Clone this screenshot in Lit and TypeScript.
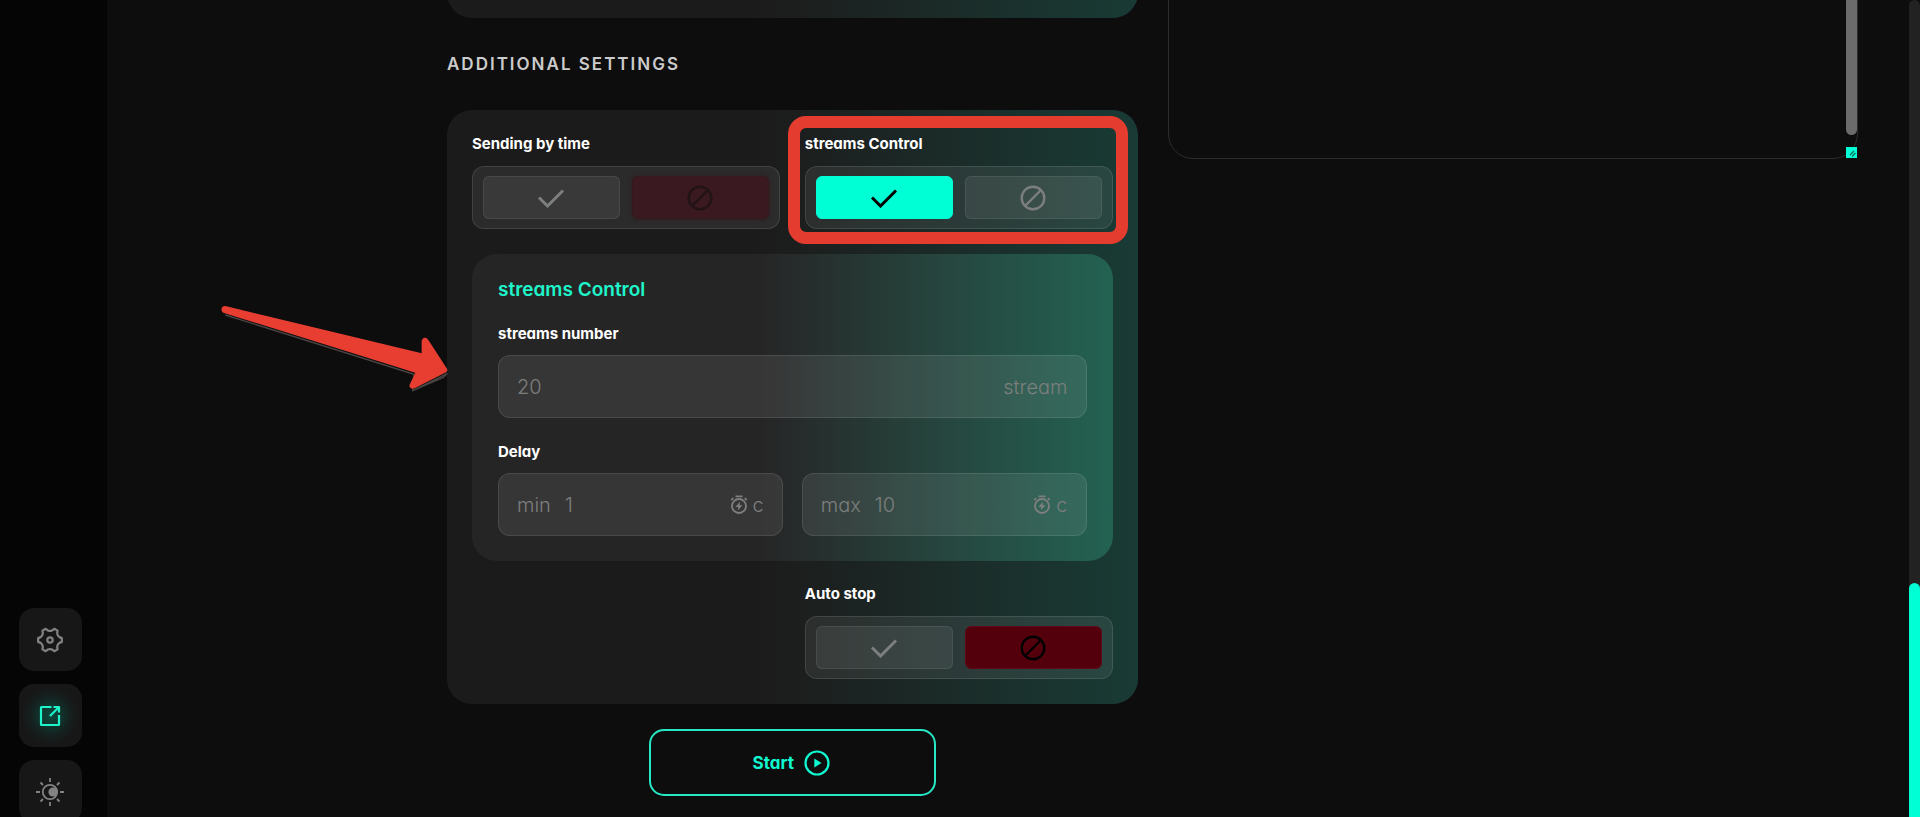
import { LitElement, html, css, svg, nothing } from "lit";
import { customElement, property } from "lit/decorators.js";

const gearPath = (() => {
  const at = (radius: number, degrees: number) => {
    const a = (degrees * Math.PI) / 180;
    return `${(14 + radius * Math.cos(a)).toFixed(2)} ${(14 + radius * Math.sin(a)).toFixed(2)}`;
  };
  return [0, 60, 120, 180, 240, 300]
    .map((a, i) => `${i ? "L" : "M"}${at(12, a - 9)}L${at(12, a + 9)}L${at(9.8, a + 17)}Q${at(8.6, a + 30)} ${at(9.8, a + 43)}`)
    .join("") + "Z";
})();

const checkIcon = svg`<svg width="28" height="20" viewBox="0 0 28 20" aria-hidden="true"><path d="M2 9.500L10.500 18L26 2.500" fill="none" stroke="currentColor" stroke-width="3"/></svg>`;
const banIcon = svg`<svg width="26" height="26" viewBox="0 0 26 26" aria-hidden="true"><g fill="none" stroke="currentColor" stroke-width="2.4"><circle cx="13" cy="13" r="11.3"/><path d="M5 21L21 5"/></g></svg>`;
const timerIcon = svg`<svg width="18" height="20" viewBox="0 0 18 20" aria-hidden="true"><g fill="none" stroke="currentColor" stroke-width="1.800"><circle cx="9" cy="11" r="7"/><path d="M5.500 1.300H12.500M1.300 5L3.300 3.200M16.700 5L14.700 3.200"/></g><path d="M10 6.700L5.400 11.900H8.200L7.900 15.300L12.600 10.200H9.700Z" fill="currentColor"/></svg>`;
const gearIcon = svg`<svg width="28" height="28" viewBox="0 0 28 28" aria-hidden="true"><g fill="none" stroke="currentColor" stroke-width="2.200" stroke-linejoin="round"><path d=${gearPath}/><circle cx="14" cy="14" r="2.700"/></g></svg>`;
const shareIcon = svg`<svg width="24" height="24" viewBox="0 0 24 24" aria-hidden="true"><g fill="none" stroke="currentColor" stroke-width="2.200" stroke-linejoin="round"><path d="M13.500 3H3.500Q3 3 3 3.500V20.500Q3 21 3.500 21H20.500Q21 21 21 20.500V11"/><path d="M12 12L20.500 3.500"/><path d="M15.500 3H21V8.500"/></g></svg>`;
const lightIcon = svg`<svg width="28" height="28" viewBox="0 0 28 28" aria-hidden="true"><g fill="none" stroke="currentColor" stroke-width="1.800"><circle cx="14" cy="14" r="7.200"/><path d="M14 0V4M14 24V28M0 14H4M24 14H28M4.500 4.500L7 7M21 21L23.500 23.500M4.500 23.500L7 21M21 7L23.500 4.500"/></g><circle cx="17" cy="14" r="4.600" fill="currentColor"/></svg>`;
const playIcon = svg`<svg width="26" height="26" viewBox="0 0 26 26" aria-hidden="true"><circle cx="13" cy="13" r="11.500" fill="none" stroke="currentColor" stroke-width="2.200"/><path d="M10.300 8.500L17.500 13L10.300 17.500Z" fill="currentColor"/></svg>`;

@customElement("switch-field")
class SwitchField extends LitElement {
  @property() label = "";
  @property() value = "off";
  @property({ type: Boolean }) muted = false;
  @property({ type: Boolean }) marked = false;

  static styles = css`
    :host { display: block; position: relative; min-width: 0; }
    .caption { display: block; font-size: 15px; line-height: 20px; font-weight: 700; color: #fff; margin-bottom: 12px; }
    .track {
      display: grid; grid-template-columns: 1fr 1fr; gap: 12px; box-sizing: border-box;
      height: 63px; padding: 9px 10px; border: 1px solid rgba(255, 255, 255, 0.11);
      border-radius: 12px; background: rgba(255, 255, 255, 0.07);
    }
    .option {
      position: relative; display: flex; align-items: center; justify-content: center;
      box-sizing: border-box; border: 1px solid rgba(255, 255, 255, 0.08); border-radius: 6px;
      background: rgba(255, 255, 255, 0.07); color: #7d7f7f;
    }
    .radio { position: absolute; inset: 0; margin: 0; opacity: 0; cursor: pointer; }
    .on { background: #00ffd5; border-color: #00ffd5; color: #000; }
    .off { background: #54000c; border-color: #5f0a18; color: #000; }
    .muted .off { background: #3a1920; border-color: #34191f; color: #211316; box-shadow: 0 0 4px #33191e; }
    .mark {
      position: absolute; inset: -18px -15px -15px -17px; border: 12px solid #e43d30;
      border-radius: 18px; pointer-events: none;
    }
  `;

  render() {
    const on = this.value === "on";
    return html`
      <span class="caption" id="caption">${this.label}</span>
      <div class="track ${this.muted ? "muted" : ""}" role="radiogroup" aria-labelledby="caption">
        <label class="option ${on ? "on" : ""}">
          <input class="radio" type="radio" name="state" aria-label="On" .checked=${on} @change=${() => (this.value = "on")} />${checkIcon}
        </label>
        <label class="option ${on ? "" : "off"}">
          <input class="radio" type="radio" name="state" aria-label="Off" .checked=${!on} @change=${() => (this.value = "off")} />${banIcon}
        </label>
      </div>
      ${this.marked ? html`<div class="mark"></div>` : nothing}
    `;
  }
}

@customElement("app-root")
class AppRoot extends LitElement {
  static styles = css`
    :host {
      display: flex; height: 100vh; overflow: hidden; background: #0d0d0e; color: #fff;
      font-family: Inter, "Liberation Sans", sans-serif; font-feature-settings: "cv11";
    }
    * { box-sizing: border-box; }
    .sidebar {
      flex: none; width: 107px; padding: 608px 25px 0 19px; background: #050505;
      display: flex; flex-direction: column; gap: 13px;
    }
    .nav {
      flex: none; width: 63px; height: 63px; border: 0; border-radius: 15px; padding: 0 1px 0 0;
      background: #171717; color: #828282; display: flex; align-items: center; justify-content: center;
    }
    .current { color: #1ef5cb; background: radial-gradient(circle, #0b4a3e 0, #15201e 45%, #171717 65%); }
    .main { flex: 1; min-width: 0; display: grid; grid-template-columns: 1fr 1fr; gap: 30px; padding: 0 51px 0 340px; align-items: start; }
    .column { display: flex; flex-direction: column; min-width: 0; }
    .panel { position: relative; border-radius: 25px; background: linear-gradient(90deg, #1c1b1b 45%, #1b2b28 72%, #193b35 100%); }
    .previous { height: 60px; margin-top: -42px; }
    .title { margin: 34px 0; font-size: 17px; line-height: 24px; font-weight: 600; letter-spacing: 2px; color: #cbcbcb; text-transform: uppercase; }
    .settings { padding: 24px 25px 25px; display: grid; grid-template-columns: 1fr 1fr; column-gap: 25px; }
    .group {
      grid-column: 1 / -1; margin: 25px 0 23px; padding: 24px 26px 25px; border-radius: 25px;
      background: linear-gradient(90deg, #262526 45%, #26443d 72%, #236252 100%);
    }
    .heading { margin: 0 0 22px; font-size: 19px; line-height: 24px; font-weight: 600; color: #1ef5cb; }
    .label { display: block; font-size: 15px; line-height: 20px; font-weight: 700; margin-bottom: 11px; }
    .box {
      display: flex; align-items: center; height: 63px; padding: 0 18px; border-radius: 12px; min-width: 0;
      border: 1px solid rgba(255, 255, 255, 0.1); background: rgba(255, 255, 255, 0.08); color: #7c7f7e;
      font-size: 20px; font-weight: 300;
    }
    .input { flex: 1; min-width: 0; width: 0; padding: 0; border: 0; outline: 0; background: none; color: inherit; font: inherit; font-feature-settings: inherit; }
    .input::placeholder { color: inherit; opacity: 1; }
    .pre { margin-right: 14px; }
    .unit { margin-left: 5px; }
    .count { margin-bottom: 24px; }
    .pair { display: grid; grid-template-columns: 1fr 1fr; gap: 19px; }
    .last { grid-column: 2; }
    .start {
      align-self: center; display: flex; align-items: center; justify-content: center; gap: 10px;
      width: 287px; height: 67px; margin-top: 25px; padding: 0 2px 0 0; border: 2px solid #26e8c5; border-radius: 15px;
      background: none; color: #10f8d0; font: inherit; font-size: 17px; font-weight: 700;
    }
    .arrow { position: absolute; left: -237px; top: 180px; width: 250px; height: 120px; pointer-events: none; }
    .log { position: relative; height: 200px; margin-top: -41px; }
    .text { display: block; width: 100%; height: 100%; border: 1px solid #2b2d2c; border-radius: 25px; background: none; resize: none; outline: 0; }
    .logthumb { position: absolute; right: 1px; top: 0; width: 11px; height: 176px; border-radius: 6px; background: #6b6b6b; }
    .grip { position: absolute; right: 1px; bottom: 1px; width: 11px; height: 11px; background: #00ffd5; }
    .scroll { flex: none; width: 11px; background: #222223; border-radius: 6px 6px 0 0; padding-top: 583px; }
    .thumb { height: 100%; background: #00ffd5; border-radius: 6px 6px 0 0; }
  `;

  private delay(pre: string, value: string) {
    return html`<label class="box">
      <span class="pre">${pre}</span>
      <input class="input" placeholder=${value} />
      ${timerIcon}<span class="unit">c</span>
    </label>`;
  }

  render() {
    return html`
      <nav class="sidebar">
        <button class="nav" aria-label="Settings">${gearIcon}</button>
        <button class="nav current" aria-label="Open">${shareIcon}</button>
        <button class="nav" aria-label="Theme">${lightIcon}</button>
      </nav>
      <main class="main">
        <div class="column">
          <section class="panel previous"></section>
          <h2 class="title">Additional settings</h2>
          <section class="panel settings">
            <switch-field label="Sending by time" muted></switch-field>
            <switch-field label="streams Control" value="on" marked></switch-field>
            <div class="group">
              <h3 class="heading">streams Control</h3>
              <label class="label" for="count">streams number</label>
              <div class="box count"><input class="input" id="count" placeholder="20" /><span>stream</span></div>
              <span class="label">Delay</span>
              <div class="pair">${this.delay("min", "1")}${this.delay("max", "10")}</div>
            </div>
            <switch-field class="last" label="Auto stop"></switch-field>
            <svg class="arrow" viewBox="0 0 750 360" aria-hidden="true">
              <path d="M46 75L612 253L608 302L712 250L700 262L610 301" fill="none" stroke="#4a4543" stroke-width="4"/>
              <path d="M46 48L635 190V152Q638 142 645 143Q651 143 655 150L711 236Q714 243 708 247L614 295Q604 299 599 291Q597 286 601 280L616 248L42 69Q34 66 34 58Q36 48 46 48Z" fill="#e83e32"/>
            </svg>
          </section>
          <button class="start">Start ${playIcon}</button>
        </div>
        <div class="log">
          <textarea class="text" aria-label="Log"></textarea>
          <div class="logthumb"></div>
          <svg class="grip" viewBox="0 0 11 11" aria-hidden="true"><path d="M4 8L8 4M6 9.500L9.500 6" stroke="#0b6b5b" stroke-width="1.300"/></svg>
        </div>
      </main>
      <div class="scroll"><div class="thumb"></div></div>
    `;
  }
}
